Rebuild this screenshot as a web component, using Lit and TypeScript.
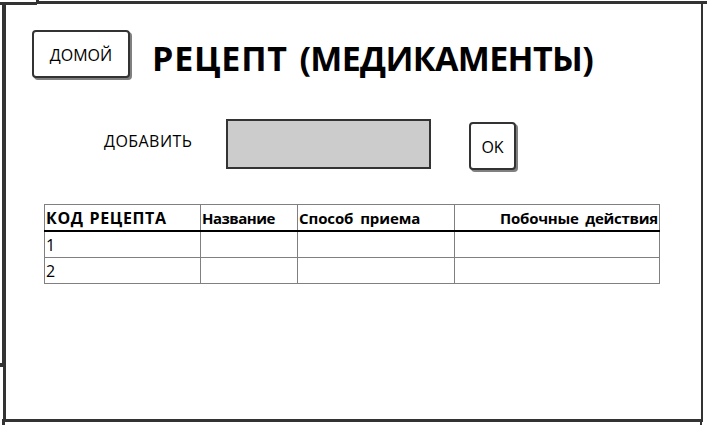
import { LitElement, html, css, svg } from "lit";
import { customElement } from "lit/decorators.js";
import { classMap } from "lit/directives/class-map.js";

// Border strokes of the panel and of its neighbours: x, y, width, height
const strokes = [
  [0, 2, 37, 3], [36, 0, 3, 4], [36, 1, 671, 3],
  [2, 2, 4, 365], [3, 366, 3, 56], [0, 363, 3, 4],
  [2, 419, 701, 3], [2, 419, 3, 6],
  [701, 1, 2, 421], [700, 422, 2, 3],
];

const columns = [
  { name: "КОД РЕЦЕПТА", cls: "code" },
  { name: "Название", cls: "name" },
  { name: "Способ приема", cls: "usage" },
  { name: "Побочные действия", cls: "effects" },
];
const rows = [["1", "", "", ""], ["2", "", "", ""]];

@customElement("app-root")
export class AppRoot extends LitElement {
  static styles = css`
    :host {
      display: block;
      position: relative;
      box-sizing: border-box;
      width: 707px;
      height: 425px;
      overflow: hidden;
      background: #fff;
      color: #000;
      font: 16px/24px "Open Sans", "Noto Sans", sans-serif;
    }
    * { box-sizing: border-box; }
    .frame { position: absolute; inset: 0; fill: #333; pointer-events: none; }
    .page { padding: 30px 47px 0 32px; }
    .top { display: flex; height: 48px; }
    button {
      font: inherit;
      color: inherit;
      padding: 2px 0 0;
      height: 48px;
      background: #fff;
      border: 2px solid #333;
      border-radius: 4px;
      box-shadow: 2px 2px 0 #808080;
      white-space: nowrap;
    }
    .home { width: 98px; }
    h1 {
      margin: 0 0 0 22px;
      font-size: 34px;
      line-height: 56px;
      font-weight: 700;
      letter-spacing: 0.8px;
      word-spacing: 2px;
      white-space: nowrap;
    }
    .tight { letter-spacing: -0.65px; }
    .add { display: flex; margin-top: 41px; padding-left: 72px; height: 51px; }
    .add label { width: 122px; line-height: 45px; letter-spacing: 0.45px; white-space: nowrap; }
    .add input {
      width: 205px;
      height: 50px;
      padding: 0 8px;
      border: 2px solid #333;
      border-radius: 0;
      background: #ccc;
      font: inherit;
      outline: none;
    }
    .ok { width: 47px; margin: 3px 0 0 38px; }
    .table {
      display: grid;
      grid-template-columns: 156px 97px 157px 206px;
      grid-template-rows: 27px 26px 26px;
      width: 616px;
      height: 80px;
      margin: 34px 0 0 12px;
      border-top: 1px solid #808080;
    }
    .cell {
      border-left: 1px solid #808080;
      border-bottom: 1px solid #808080;
      padding-left: 1px;
      line-height: 26px;
      white-space: nowrap;
    }
    .cell.effects { border-right: 1px solid #808080; }
    .cell.head {
      border: 0;
      padding-left: 2px;
      font-size: 15px;
      font-weight: 700;
      background:
        linear-gradient(#000, #000) left bottom / 100% 2px no-repeat,
        linear-gradient(#808080, #808080) left top / 1px 100% no-repeat;
    }
    .head.code { font-size: 16px; letter-spacing: 0.65px; word-spacing: 1px; }
    .head.name { letter-spacing: -0.5px; }
    .head.usage { letter-spacing: -0.1px; word-spacing: 3px; }
    .cell.head.effects {
      text-align: right;
      padding-right: 2px;
      letter-spacing: -0.25px;
      word-spacing: 3px;
      background:
        linear-gradient(#000, #000) left bottom / 100% 2px no-repeat,
        linear-gradient(#808080, #808080) left top / 1px 100% no-repeat,
        linear-gradient(#808080, #808080) right top / 1px 100% no-repeat;
    }
  `;

  render() {
    return html`
      <svg class="frame" width="707" height="425" shape-rendering="crispEdges" aria-hidden="true">
        ${strokes.map(([x, y, w, h]) => svg`<rect x=${x} y=${y} width=${w} height=${h}></rect>`)}
      </svg>
      <main class="page">
        <header class="top">
          <button class="home">ДОМОЙ</button>
          <h1>РЕЦЕПТ <span class="tight">(МЕДИКАМЕНТЫ)</span></h1>
        </header>
        <section class="add">
          <label for="entry">ДОБАВИТЬ</label>
          <input id="entry" />
          <button class="ok">OK</button>
        </section>
        <section class="table">
          ${columns.map((c) => html`<div class="cell head ${c.cls}">${c.name}</div>`)}
          ${rows.map((r) => r.map((v, j) => html`<div
            class=${classMap({ cell: true, [columns[j].cls]: true })}>${v}</div>`))}
        </section>
      </main>
    `;
  }
}
